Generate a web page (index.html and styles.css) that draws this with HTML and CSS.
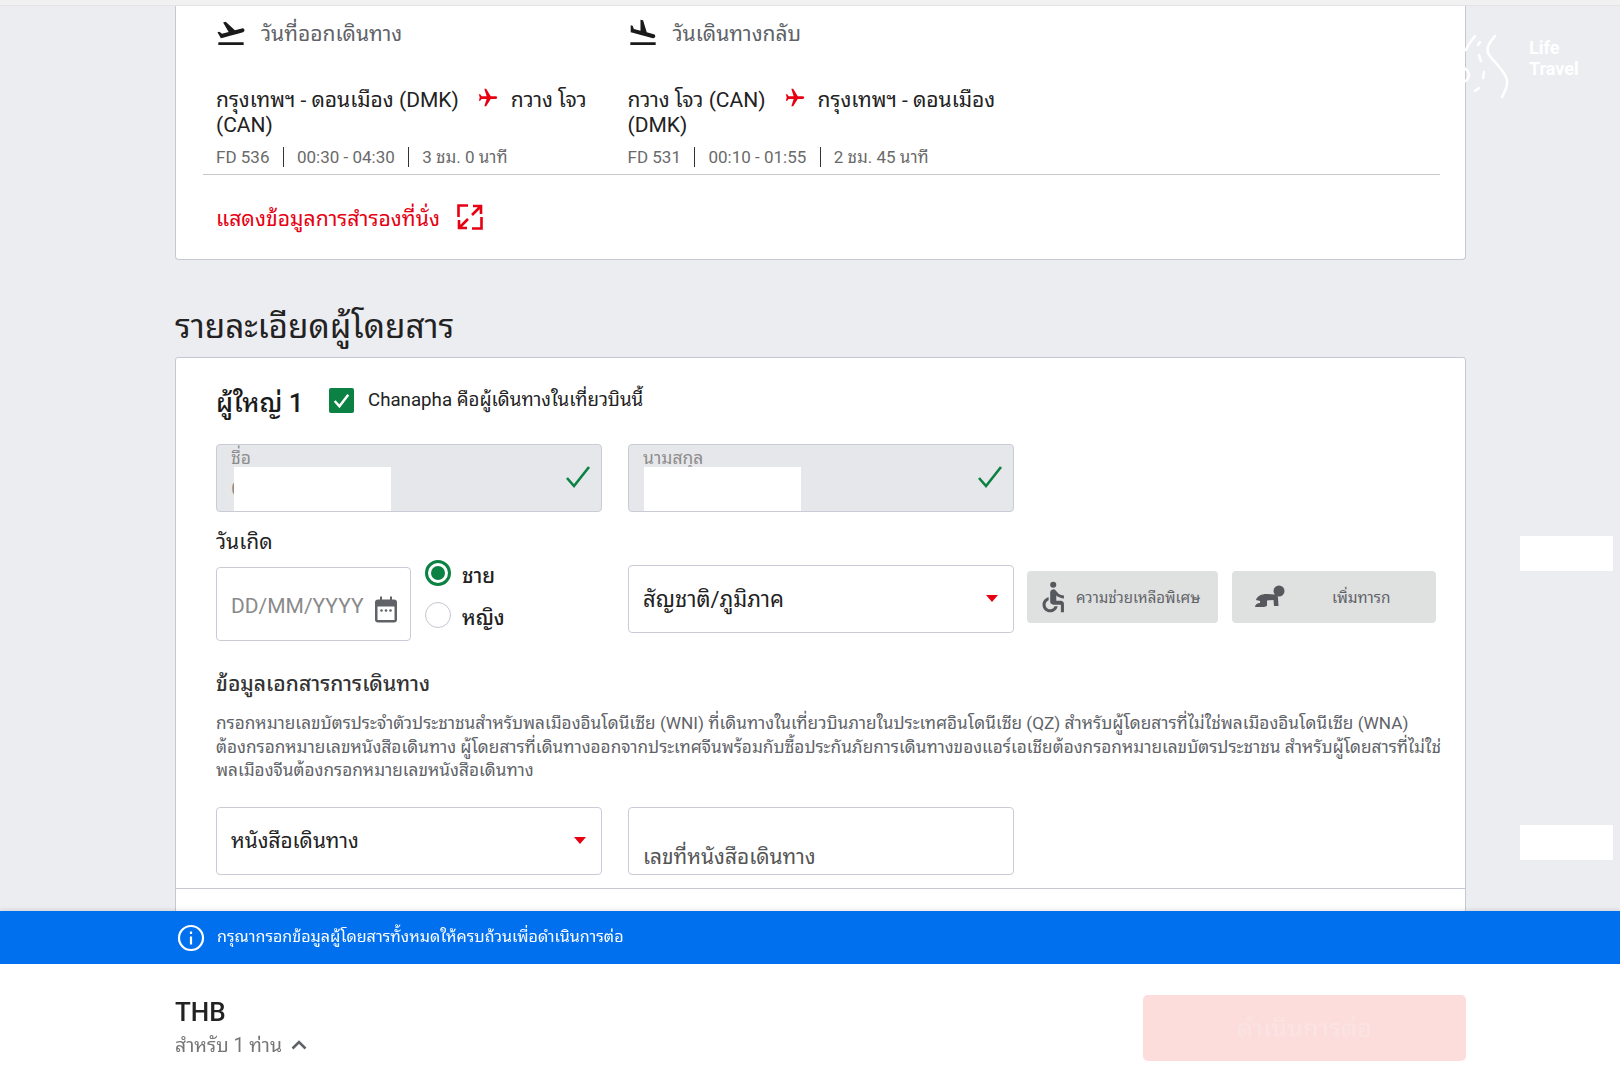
FILE: index.html
```html
<!DOCTYPE html>
<html lang="th">
<head>
<meta charset="utf-8">
<title>รายละเอียดผู้โดยสาร</title>
<link rel="stylesheet" href="styles.css">
</head>
<body>
<div class="topbar"></div>
<main class="page">
  <section class="card flights">
    <div class="flight-cols">
      <div class="flight-col">
        <div class="flight-head">
          <svg class="head-icon" viewBox="0 0 24 24"><path d="M2.5 19h19v2h-19zm19.57-9.36c-.21-.8-1.04-1.28-1.84-1.06L14.92 10l-6.9-6.43-1.93.51 4.14 7.17-4.97 1.33-1.97-1.54-1.45.39 1.82 3.16.77 1.33 1.6-.43 5.31-1.42 4.35-1.16L21 11.49c.81-.23 1.28-1.05 1.07-1.85z"/></svg>
          <span>วันที่ออกเดินทาง</span>
        </div>
        <div class="route">กรุงเทพฯ - ดอนเมือง (DMK)<svg class="plane" viewBox="0 0 24 24"><path d="M21 16v-2l-8-5V3.5c0-.83-.67-1.5-1.5-1.5S10 2.67 10 3.5V9l-8 5v2l8-2.5V19l-2 1.5V22l3.5-1 3.5 1v-1.5L13 19v-5.5l8 2.5z"/></svg>กวาง<span class="lead">โจว</span><br>(CAN)</div>
        <div class="meta"><span>FD 536</span><span>00:30 - 04:30</span><span>3 ชม. 0 นาที</span></div>
      </div>
      <div class="flight-col">
        <div class="flight-head">
          <svg class="head-icon" viewBox="0 0 24 24"><path d="M2.5 19h19v2h-19zm7.18-5.73l4.35 1.16 5.31 1.42c.8.21 1.62-.26 1.84-1.06.21-.8-.26-1.62-1.06-1.84l-5.31-1.42-2.76-9.02L10.12 2v8.28L5.15 8.95l-.93-2.32-1.45-.39v5.17l1.6.43 5.31 1.43z"/></svg>
          <span>วันเดินทางกลับ</span>
        </div>
        <div class="route">กวาง<span class="lead">โจว</span> (CAN)<svg class="plane" viewBox="0 0 24 24"><path d="M21 16v-2l-8-5V3.5c0-.83-.67-1.5-1.5-1.5S10 2.67 10 3.5V9l-8 5v2l8-2.5V19l-2 1.5V22l3.5-1 3.5 1v-1.5L13 19v-5.5l8 2.5z"/></svg>กรุงเทพฯ - ดอนเมือง<br>(DMK)</div>
        <div class="meta"><span>FD 531</span><span>00:10 - 01:55</span><span>2 ชม. 45 นาที</span></div>
      </div>
    </div>
    <div class="seat-link">
      <span>แสดงข้อมูลการสำรองที่นั่ง</span>
      <svg class="expand" viewBox="0 0 26 26"><path d="M11 1.500H1.500V13M15 24.500h9.500V13"/><path d="M15 11l8-8M16 2h8v8M11 15l-8 8M2 16v8h8"/></svg>
    </div>
  </section>

  <h1 class="section-title">รายละเอียดผู้โดยสาร</h1>

  <section class="card passenger">
    <div class="pax-head">
      <h2>ผู้ใหญ่ 1</h2>
      <span class="checkbox"><svg viewBox="0 0 24 24"><path d="M5.5 12.5l4.5 5 8.5-11"/></svg></span>
      <span class="pax-note">Chanapha คือผู้เดินทางในเที่ยวบินนี้</span>
    </div>

    <div class="row name-row">
      <div class="field filled">
        <span class="float-label">ชื่อ</span>
        <span class="value">C</span>
        <span class="redact first"></span>
        <svg class="ok" viewBox="0 0 26 26"><path d="M2 14l7 8L24 3"/></svg>
      </div>
      <div class="field filled">
        <span class="float-label">นามสกุล</span>
        <span class="redact"></span>
        <svg class="ok" viewBox="0 0 26 26"><path d="M2 14l7 8L24 3"/></svg>
      </div>
    </div>

    <div class="dob-label">วันเกิด</div>
    <div class="row dob-row">
      <div class="left-group">
        <div class="date">
          <span>DD/MM/YYYY</span>
          <svg class="cal" viewBox="0 0 24 26"><path d="M6 0h2v3h8V0h2v3h2a3 3 0 0 1 3 3v17a3 3 0 0 1-3 3H4a3 3 0 0 1-3-3V6a3 3 0 0 1 3-3h2zM3.500 10v13a.5.5 0 0 0 .5.5h16a.5.5 0 0 0 .5-.5V10z"/><circle cx="7.500" cy="14" r="1.300"/><circle cx="12" cy="14" r="1.300"/><circle cx="16.500" cy="14" r="1.300"/></svg>
        </div>
        <div class="gender">
          <label class="radio-row"><span class="radio on"></span><span>ชาย</span></label>
          <label class="radio-row"><span class="radio"></span><span>หญิง</span></label>
        </div>
      </div>
      <div class="field select tall">สัญชาติ/ภูมิภาค<span class="caret"></span></div>
      <button class="assist a1" type="button">
        <svg viewBox="4 1 17 22"><circle cx="12" cy="4" r="2"/><path d="M19 13v-2c-1.540.020-3.090-.750-4.070-1.830l-1.290-1.430c-.170-.190-.380-.340-.610-.450-.010 0-.010-.010-.020-.010H13c-.350-.200-.750-.300-1.190-.260C10.760 7.110 10 8.040 10 9.090V15c0 1.100.900 2 2 2h5v5h2v-5.500c0-1.100-.900-2-2-2h-3v-3.450c1.290 1.070 3.250 1.940 5 1.950zm-6.170 5c-.410 1.160-1.520 2-2.830 2-1.660 0-3-1.340-3-3 0-1.310.840-2.410 2-2.830V12.100c-2.280.460-4 2.480-4 4.900 0 2.760 2.240 5 5 5 2.420 0 4.440-1.720 4.900-4h-2.070z"/></svg>
        <span>ความช่วยเหลือพิเศษ</span>
      </button>
      <button class="assist a2" type="button">
        <svg viewBox="0 0 32 24"><circle cx="25" cy="6" r="5.500"/><path d="M2 15C3 11 8 9 12 9l9 .5c2 .5 3 1.500 3 3.500l.5 8H20l-.5-6-6.500.5V20c0 2-4 2-5 2H1c0-2 2-4 5-4v-2z"/></svg>
        <span>เพิ่มทารก</span>
      </button>
    </div>

    <h3 class="doc-title">ข้อมูลเอกสารการเดินทาง</h3>
    <p class="doc-text">กรอกหมายเลขบัตรประจำตัวประชาชนสำหรับพลเมืองอินโดนีเซีย (WNI) ที่เดินทางในเที่ยวบินภายในประเทศอินโดนีเซีย (QZ) สำหรับผู้โดยสารที่ไม่ใช่พลเมืองอินโดนีเซีย (WNA)<br>ต้องกรอกหมายเลขหนังสือเดินทาง ผู้โดยสารที่เดินทางออกจากประเทศจีนพร้อมกับซื้อประกันภัยการเดินทางของแอร์เอเชียต้องกรอกหมายเลขบัตรประชาชน สำหรับผู้โดยสารที่ไม่ใช่<br>พลเมืองจีนต้องกรอกหมายเลขหนังสือเดินทาง</p>

    <div class="row doc-row">
      <div class="field select doc-select">หนังสือเดินทาง<span class="caret"></span></div>
      <div class="field placeholder">เลขที่หนังสือเดินทาง</div>
    </div>
    <div class="pax-divider"></div>
  </section>
</main>

<div class="logo">
  <svg viewBox="0 0 60 70"><path d="M15 4C11 9 8 13 6 18M20 10l-2 3M19 23l2 6M24 40l-1 6M19 56l-4 3M35 4c-5 6-9 11-7 17 2 6 16 15 19 27 1 7-3 13-5 17"/><circle cx="2" cy="43" r="7"/></svg>
  <span>Life<br>Travel</span>
</div>
<div class="side-box box1"></div>
<div class="side-box box2"></div>

<footer class="footer">
  <div class="notice">
    <svg viewBox="0 0 28 28"><circle cx="14" cy="14" r="12"/><path d="M14 12.500v8M14 7.500v2.500"/></svg>
    <span>กรุณากรอกข้อมูลผู้โดยสารทั้งหมดให้ครบถ้วนเพื่อดำเนินการต่อ</span>
  </div>
  <div class="summary">
    <div class="price">
      <div class="currency">THB</div>
      <div class="for">สำหรับ 1 ท่าน<svg viewBox="0 0 16 10"><path d="M1.500 8.500L8 2l6.500 6.500"/></svg></div>
    </div>
    <button class="continue" type="button">ดำเนินการต่อ</button>
  </div>
</footer>
</body>
</html>
```
FILE: styles.css
```css
* { box-sizing: border-box; }
html, body { margin: 0; height: 1080px; overflow: hidden; }
body {
  background: #ecedf1;
  font-family: Roboto, "Noto Sans Thai Looped", Tahoma, Loma, "Noto Sans", sans-serif;
  color: #1a1a1a;
}
.topbar { height: 6px; background: #f1f1f1; border-bottom: 1px solid #e3e3e6; }
.page { width: 1291px; margin-left: 175px; }
.card { background: #fff; border: 1px solid #c5c8d3; border-radius: 3px; }
.flights { border-top: 0; height: 254px; padding: 0 26px 0 40px; border-radius: 0 0 4px 4px; }
.flight-cols { display: flex; height: 169px; margin: 0 0 0 -13px; padding-left: 13px; border-bottom: 1px solid #c9c9c9; width: 1237px; }
.flight-col { width: 411.500px; padding-right: 30px; }
.flight-head { display: flex; align-items: center; gap: 14px; height: 34px; margin-top: 10px; font-size: 21px; color: #5f6368; }
.flight-head span { margin-top: -4px; }
.head-icon { width: 32px; height: 32px; fill: #1a1a1a; margin-left: -1px; }
.route { margin-top: 37px; font-size: 21px; line-height: 25px; color: #222; }
.lead { margin-left: 5px; }
.plane { width: 22px; height: 22px; fill: #e60012; transform: rotate(90deg); vertical-align: -2px; margin: 0 12px 0 18px; }
.meta { display: flex; margin-top: 9px; font-size: 17px; line-height: 20px; color: #6a6a6a; }
.meta span + span { border-left: 1px solid #333; margin-left: 13.500px; padding-left: 13px; }
.seat-link { display: flex; align-items: center; gap: 17px; margin-top: 24px; font-size: 21.200px; color: #e60012; }
.expand { width: 26px; height: 26px; fill: none; stroke: #e60012; stroke-width: 2.600; margin-top: 1px; }

.section-title { margin: 42px 0 0; height: 55px; font-size: 33.300px; line-height: 50px; font-weight: 400; color: #222; }
.passenger { height: 700px; padding: 0 26px 0 40px; }
.pax-head { display: flex; align-items: center; height: 60px; margin-top: 15px; }
.pax-head h2 { margin: -6px 0 0; width: 113px; font-size: 25.800px; font-weight: 500; }
.checkbox { width: 25px; height: 25px; margin-top: -6px; background: #0b8143; border-radius: 2px; display: flex; }
.checkbox svg { fill: none; stroke: #fff; stroke-width: 2.400; }
.pax-note { margin: -10px 0 0 14px; font-size: 18.700px; color: #222; }

.row { display: flex; }
.field { position: relative; width: 386px; border: 1px solid #c9ccd6; border-radius: 4px; background: #fff; }
.field + .field { margin-left: 26px; }
.name-row { margin-top: 11px; }
.filled { height: 68px; background: #e6e7ea; }
.float-label { position: absolute; left: 14px; top: -3px; font-size: 17.500px; color: #8d8d8d; }
.value { position: absolute; left: 14px; top: 32px; font-size: 21px; color: #8d8d8d; }
.redact { position: absolute; left: 15px; top: 22px; width: 157px; height: 44px; background: #fff; }
.redact.first { left: 17px; }
.ok { position: absolute; right: 10px; top: 19px; width: 26px; height: 26px; fill: none; stroke: #0b8143; stroke-width: 2.600; }
.dob-label { margin-top: 16px; font-size: 21px; line-height: 28px; color: #222; }
.dob-row { align-items: flex-start; margin-top: 10px; }
.left-group { display: flex; width: 412px; }
.date { display: flex; align-items: center; justify-content: space-between; width: 195px; height: 74px; margin-top: 1px; padding: 0 12px 0 14px; border: 1px solid #c9ccd6; border-radius: 4px; font-size: 21px; color: #8a8a8a; }
.date span { margin-top: 4px; }
.cal { width: 24px; height: 27px; margin-top: 10px; fill: #5f6368; }
.gender { margin: -14px 0 0 14px; }
.radio-row { display: flex; align-items: center; gap: 11px; height: 42px; font-size: 20.500px; font-weight: 500; color: #222; }
.radio { position: relative; width: 26px; height: 26px; border: 1px solid #c4c7d0; border-radius: 50%; }
.radio.on { border: 3px solid #0b8143; }
.radio.on::after { content: ""; position: absolute; inset: 3px; background: #0b8143; border-radius: 50%; }
.select { display: flex; align-items: center; height: 68px; padding: 0 13px 5px 14px; font-size: 22px; color: #222; }
.doc-select { font-size: 20.800px; padding-bottom: 4px; }
.tall { margin-top: -1px; }
.caret { position: absolute; right: 15px; top: 29px; border: 6.500px solid transparent; border-top: 7px solid #e60012; border-bottom: 0; }
.assist { display: flex; align-items: center; height: 52px; margin: 5px 0 0 14px; border: 0; border-radius: 4px; background: #dfe0e0; color: #5f6368; font: inherit; font-size: 15px; }
.assist svg { fill: #55595d; flex: none; }
.assist span { margin-top: -3px; }
.a1 { width: 191px; margin-left: 13px; padding: 0 0 0 14px; }
.a1 svg { width: 26px; height: 34px; margin-right: 9px; }
.a2 { width: 204px; padding: 0 0 0 22px; font-size: 15.400px; }
.a2 svg { width: 32px; height: 24px; margin-right: 46px; }
.doc-title { margin: 29px 0 0; font-size: 21px; line-height: 28px; font-weight: 500; color: #333; }
.doc-text { margin: 14px 0 0; white-space: nowrap; font-size: 17.200px; line-height: 23.500px; color: #5f6368; }
.doc-row { margin-top: 24px; }
.placeholder { height: 68px; padding: 35px 14px 0; font-size: 20.900px; line-height: 28px; color: #555; }
.pax-divider { margin: 13px -26px 0 -40px; border-top: 1px solid #c5c8d3; }

.logo { position: absolute; left: 1460px; top: 32px; display: flex; color: #fff; font-weight: 700; font-size: 18px; line-height: 21px; }
.logo svg { width: 60px; height: 70px; fill: none; stroke: #fff; stroke-width: 2.500; stroke-linecap: round; }
.logo span { margin: 5px 0 0 9px; }
.side-box { position: absolute; left: 1520px; width: 93px; height: 35px; background: #fff; }
.box1 { top: 536px; }
.box2 { top: 825px; }

.footer { position: fixed; left: 0; right: 0; top: 911px; height: 169px; background: #fff; box-shadow: 0 -2px 3px rgba(0, 0, 0, .08); }
.notice { display: flex; align-items: center; height: 53px; padding-left: 177px; background: #0070ef; color: #fff; font-size: 16.100px; }
.notice span { margin-top: -5px; }
.notice svg { width: 28px; height: 28px; margin-right: 12px; fill: none; stroke: #fff; stroke-width: 2.200; }
.summary { display: flex; justify-content: space-between; padding: 31px 154px 0 175px; }
.currency { margin-top: 2px; font-size: 26px; line-height: 30px; font-weight: 500; color: #222; }
.for { margin-top: 5px; font-size: 19.400px; line-height: 28px; color: #757575; }
.for svg { width: 16px; height: 10px; margin-left: 9px; vertical-align: 2px; fill: none; stroke: #5f6368; stroke-width: 2.600; }
.continue { width: 323px; height: 66px; padding-bottom: 5px; border: 0; border-radius: 5px; background: #fcdddc; color: #fbe3e2; font: inherit; font-size: 25px; font-weight: 500; }
```
